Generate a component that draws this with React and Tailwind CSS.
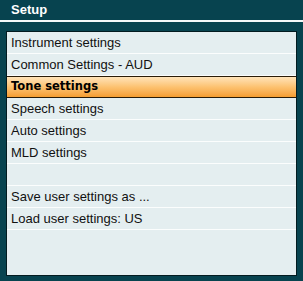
import React from 'react';

const items = [
  { label: 'Instrument settings' },
  { label: 'Common Settings - AUD' },
  { label: 'Tone settings', active: true },
  { label: 'Speech settings' },
  { label: 'Auto settings' },
  { label: 'MLD settings' },
  { label: '' },
  { label: 'Save user settings as ...' },
  { label: 'Load user settings: US' },
];

const App = () => {
  return (
    <div className="w-[303px] h-[281px] bg-[#07434f] flex flex-col font-['Liberation_Sans',Arial,sans-serif] text-[13px] overflow-hidden">
      {/* Title bar */}
      <div className="h-[20px] flex items-center pl-[11px] text-white font-bold text-[13px]">
        Setup
      </div>
      <div className="h-[2px] bg-[#f4f8f8]" />

      {/* Menu panel */}
      <div className="flex-1 pt-[9px] pl-[6px] pr-[6px] pb-[5px]">
        <div className="h-full bg-[#e4eef0] border border-[#021b20] flex flex-col">
          {items.map((item, i) =>
            item.active ? (
              <div
                key={i}
                className="h-[22px] flex items-center pl-[4px] font-['DejaVu_Sans',sans-serif] font-bold text-[11.5px] text-black bg-gradient-to-b from-[#ffe3b8] via-[#fcc270] to-[#f59d2f] border-y border-[#2a1c08]"
              >
                {item.label}
              </div>
            ) : (
              <div
                key={i}
                className="h-[22px] flex items-center pl-[4px] text-[#111] border-b border-[#fbfdfd]"
              >
                {item.label}
              </div>
            )
          )}
        </div>
      </div>
    </div>
  );
};

export default App;
